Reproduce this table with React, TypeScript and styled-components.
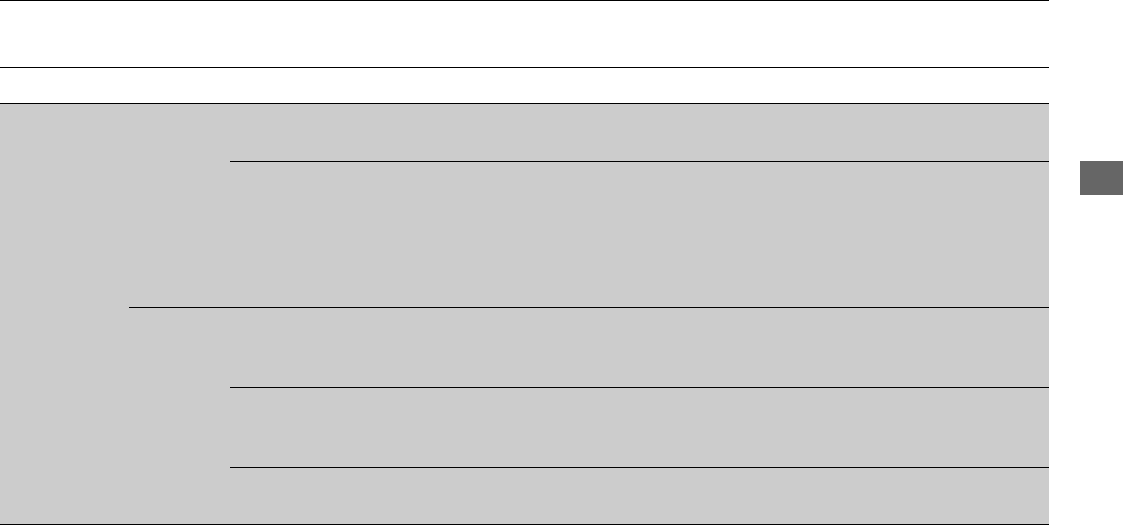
import React from 'react';
import styled, { createGlobalStyle } from 'styled-components';

const GlobalStyle = createGlobalStyle`
  html, body {
    margin: 0;
    padding: 0;
    background: #ffffff;
    font-family: "Liberation Sans", Arial, sans-serif;
  }
`;

const Page = styled.div`
  display: flex;
  align-items: flex-start;
  width: 1123px;
  height: 526px;
  overflow: hidden;
`;

const Table = styled.div`
  width: 1049px;
  border-top: 1px solid #000;
`;

const HeadRow = styled.div<{ h: number }>`
  height: ${({ h }) => h}px;
  border-bottom: 1px solid #000;
`;

const Body = styled.div`
  display: grid;
  grid-template-columns: 129px 1fr;
  background: #cccccc;
  border-bottom: 1px solid #000;
`;

const Group = styled.div<{ first?: boolean }>`
  display: grid;
  grid-template-columns: 101px 1fr;
  border-top: ${({ first }) => (first ? 'none' : '1px solid #000')};
`;

const Cells = styled.div`
  display: flex;
  flex-direction: column;
`;

const Cell = styled.div<{ h: number; first?: boolean }>`
  height: ${({ h }) => h}px;
  border-top: ${({ first }) => (first ? 'none' : '1px solid #000')};
`;

const SideTab = styled.div`
  width: 43px;
  height: 34px;
  margin: 161px 0 0 31px;
  background: #666666;
`;

const App: React.FC = () => {
  return (
    <>
      <GlobalStyle />
      <Page>
        <Table>
          <HeadRow h={66} />
          <HeadRow h={35} />
          <Body>
            <div />
            <div>
              <Group first>
                <div />
                <Cells>
                  <Cell first h={57} />
                  <Cell h={145} />
                </Cells>
              </Group>
              <Group>
                <div />
                <Cells>
                  <Cell first h={79} />
                  <Cell h={79} />
                  <Cell h={56} />
                </Cells>
              </Group>
            </div>
          </Body>
        </Table>
        <SideTab />
      </Page>
    </>
  );
};

export default App;
